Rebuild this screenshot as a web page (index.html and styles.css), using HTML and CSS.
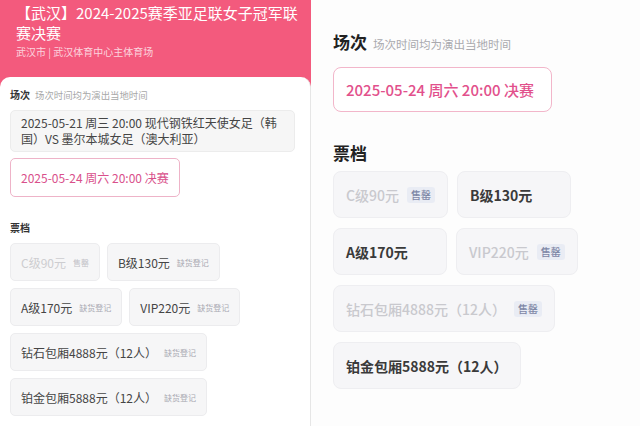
FILE: index.html
```html
<!DOCTYPE html>
<html lang="zh-CN">
<head>
<meta charset="utf-8">
<title>亚足联女子冠军联赛决赛 购票</title>
<link rel="stylesheet" href="styles.css">
</head>
<body>
<div class="page">
  <div class="left">
    <header class="hero">
      <h1 class="hero-title">【武汉】2024-2025赛季亚足联女子冠军联赛决赛</h1>
      <p class="hero-sub">武汉市 | 武汉体育中心主体育场</p>
    </header>
    <section class="card">
      <div class="sec-head">
        <span class="sec-label">场次</span>
        <span class="sec-hint">场次时间均为演出当地时间</span>
      </div>
      <div class="sessions">
        <div class="session">2025-05-21 周三 20:00 现代钢铁红天使女足（韩国）VS 墨尔本城女足（澳大利亚）</div>
        <div class="session selected">2025-05-24 周六 20:00 决赛</div>
      </div>
      <div class="sec-head tiers-head">
        <span class="sec-label">票档</span>
      </div>
      <div class="tiers">
        <div class="tier-row">
          <div class="tier disabled"><span class="tier-name">C级90元</span><span class="tier-tag">售罄</span></div>
          <div class="tier"><span class="tier-name">B级130元</span><span class="tier-tag">缺货登记</span></div>
        </div>
        <div class="tier-row">
          <div class="tier"><span class="tier-name">A级170元</span><span class="tier-tag">缺货登记</span></div>
          <div class="tier"><span class="tier-name">VIP220元</span><span class="tier-tag">缺货登记</span></div>
        </div>
        <div class="tier-row">
          <div class="tier"><span class="tier-name">钻石包厢4888元（12人）</span><span class="tier-tag">缺货登记</span></div>
        </div>
        <div class="tier-row">
          <div class="tier"><span class="tier-name">铂金包厢5888元（12人）</span><span class="tier-tag">缺货登记</span></div>
        </div>
      </div>
    </section>
  </div>

  <div class="right">
    <div class="r-head">
      <span class="r-label">场次</span>
      <span class="r-hint">场次时间均为演出当地时间</span>
    </div>
    <div class="r-session">2025-05-24 周六 20:00 决赛</div>
    <div class="r-head r-tiers-head">
      <span class="r-label">票档</span>
    </div>
    <div class="r-tiers">
      <div class="r-row">
        <div class="r-tier disabled"><span>C级90元</span><span class="r-tag">售罄</span></div>
        <div class="r-tier"><span>B级130元</span></div>
      </div>
      <div class="r-row">
        <div class="r-tier"><span>A级170元</span></div>
        <div class="r-tier disabled"><span>VIP220元</span><span class="r-tag">售罄</span></div>
      </div>
      <div class="r-row">
        <div class="r-tier disabled"><span>钻石包厢4888元（12人）</span><span class="r-tag">售罄</span></div>
      </div>
      <div class="r-row">
        <div class="r-tier"><span>铂金包厢5888元（12人）</span></div>
      </div>
    </div>
  </div>
</div>
</body>
</html>
```

FILE: styles.css
```css
* { box-sizing: border-box; }

html, body {
  margin: 0;
  padding: 0;
  background: #ffffff;
}

body {
  font-family: "Noto Sans CJK SC", "Noto Sans", sans-serif;
  color: #333;
}

.page {
  width: 640px;
  height: 426px;
  overflow: hidden;
  display: flex;
  background: #fdfdfd;
}

/* ---------- left screenshot ---------- */
.left {
  width: 311px;
  flex: none;
  display: flex;
  flex-direction: column;
  background: #f35a7d;
}

.hero {
  padding: 3px 10px 18px 16px;
}

.hero-title {
  margin: 0;
  font-size: 15px;
  line-height: 20px;
  font-weight: 400;
  color: #fff;
}

.hero-sub {
  margin: 2px 0 0;
  font-size: 10px;
  line-height: 14px;
  color: #fcd3de;
}

.card {
  flex: 1;
  background: #fff;
  border-radius: 10px 10px 0 0;
  border-right: 1px solid #e6e6e6;
  padding: 11px 15px 0 10px;
}

.sec-head {
  display: flex;
  align-items: baseline;
  gap: 5px;
  line-height: 14px;
}

.sec-label {
  font-size: 10px;
  font-weight: 700;
  color: #333;
}

.sec-hint {
  font-size: 9.4px;
  color: #a8a8a8;
}

.sessions {
  margin-top: 8px;
  display: flex;
  flex-direction: column;
  align-items: flex-start;
  gap: 6px;
}

.session {
  width: 285px;
  min-height: 39px;
  display: flex;
  align-items: center;
  padding: 4px 10px;
  font-size: 12px;
  line-height: 16px;
  color: #454545;
  background: #f6f6f6;
  border: 1px solid #ececec;
  border-radius: 5px;
}

.session.selected {
  width: auto;
  color: #d9508b;
  background: #fff;
  border-color: #eeb3c8;
}

.tiers-head {
  margin-top: 24px;
}

.tiers {
  margin-top: 8px;
  display: flex;
  flex-direction: column;
  gap: 7px;
}

.tier-row {
  display: flex;
  gap: 7px;
}

.tier {
  height: 38px;
  display: flex;
  align-items: center;
  padding: 0 10px;
  background: #f6f6f7;
  border: 1px solid #ececee;
  border-radius: 5px;
}

.tier-name {
  font-size: 12px;
  color: #454545;
}

.tier-tag {
  margin-left: 7px;
  font-size: 8px;
  color: #a9a9b2;
}

.tier.disabled .tier-name { color: #cdcdd0; }
.tier.disabled .tier-tag { color: #c3c3c8; }

/* ---------- right screenshot ---------- */
.right {
  flex: 1;
  padding: 30px 0 0 22px;
  display: flex;
  flex-direction: column;
  align-items: flex-start;
  background: #fdfdfd;
}

.r-head {
  display: flex;
  align-items: baseline;
  gap: 6px;
  line-height: 24px;
}

.r-label {
  font-size: 17px;
  font-weight: 700;
  color: #222;
}

.r-hint {
  font-size: 11.5px;
  color: #a9a9ae;
}

.r-session {
  margin-top: 11px;
  width: 219px;
  height: 45px;
  display: flex;
  align-items: center;
  padding: 0 12px;
  font-size: 15px;
  font-weight: 500;
  color: #e2508c;
  background: #fff;
  border: 1px solid #f2b6ca;
  border-radius: 8px;
}

.r-tiers-head {
  margin-top: 29px;
}

.r-tiers {
  margin-top: 6px;
  display: flex;
  flex-direction: column;
  gap: 10px;
}

.r-row {
  display: flex;
  gap: 9px;
}

.r-tier {
  min-width: 114px;
  height: 47px;
  display: flex;
  align-items: center;
  padding: 0 12px 0 12px;
  font-size: 14px;
  font-weight: 600;
  color: #3a3a3a;
  background: #f6f6f8;
  border: 1px solid #eeeef1;
  border-radius: 8px;
}

.r-tier.disabled {
  color: #c9c9ce;
  font-weight: 500;
}

.r-tag {
  margin-left: 8px;
  padding: 1px 4px;
  font-size: 10px;
  line-height: 14px;
  font-weight: 500;
  color: #7e87a6;
  background: #e9ecf4;
  border-radius: 3px;
}
```
